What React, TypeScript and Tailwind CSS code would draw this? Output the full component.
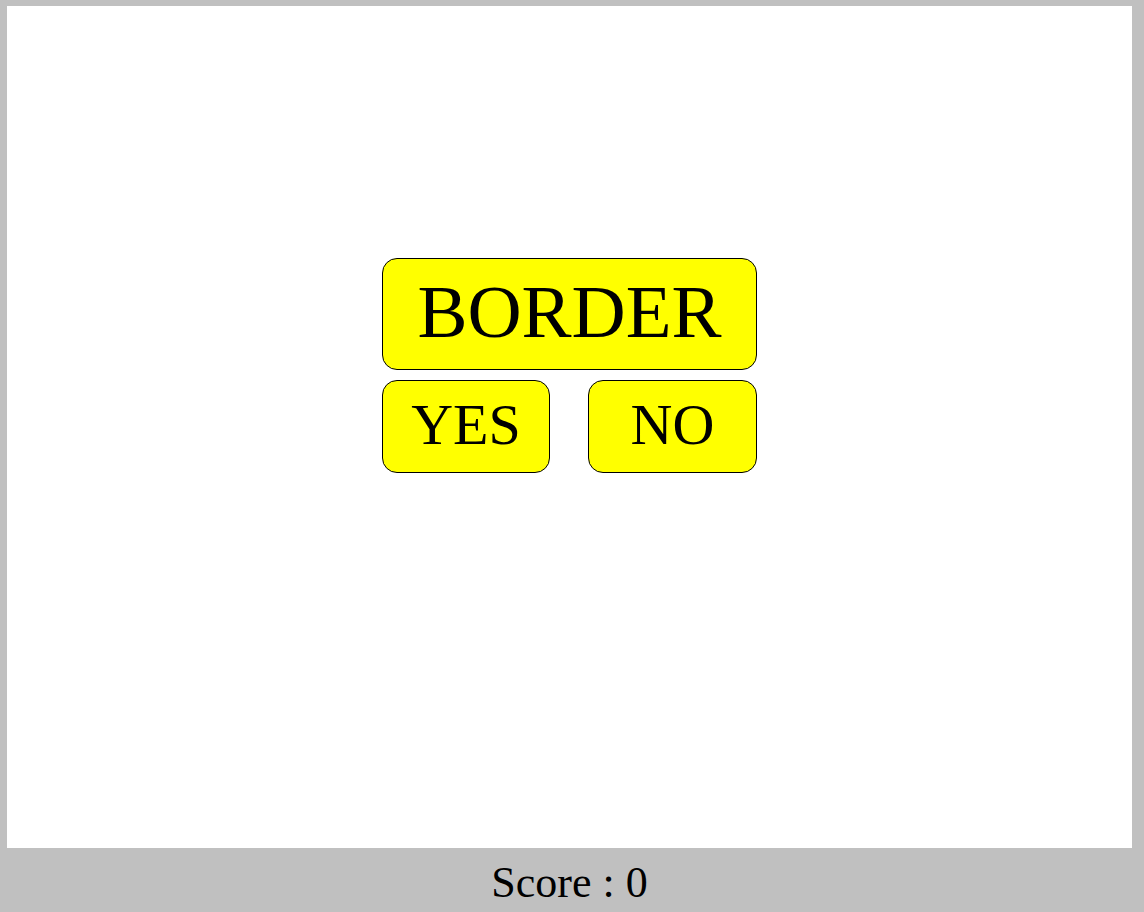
export default function App() {
  const serif = { fontFamily: '"Liberation Serif", "Times New Roman", serif' };
  return (
    <div className="flex h-[912px] w-full flex-col bg-[#c0c0c0] text-black" style={serif}>
      <div className="ml-[7px] mt-[6px] flex h-[842px] w-[1125px] flex-col items-center bg-white pt-[252px]">
        <div className="flex w-[375px] flex-col gap-[10px]">
          <div className="flex h-[112px] items-center justify-center rounded-[15px] border border-black bg-[#ffff00] pb-[5px] text-[75px] leading-none">
            BORDER
          </div>
          <div className="flex justify-between">
            <button className="flex h-[93px] w-[168px] items-center justify-center rounded-[15px] border border-black bg-[#ffff00] pb-[3px] text-[58px] leading-none">
              YES
            </button>
            <button className="flex h-[93px] w-[169px] items-center justify-center rounded-[15px] border border-black bg-[#ffff00] pb-[3px] text-[58px] leading-none">
              NO
            </button>
          </div>
        </div>
      </div>
      <div className="flex h-[64px] items-center justify-center pr-[5px] pt-[5px] text-[44px] leading-none">
        Score : 0
      </div>
    </div>
  );
}
